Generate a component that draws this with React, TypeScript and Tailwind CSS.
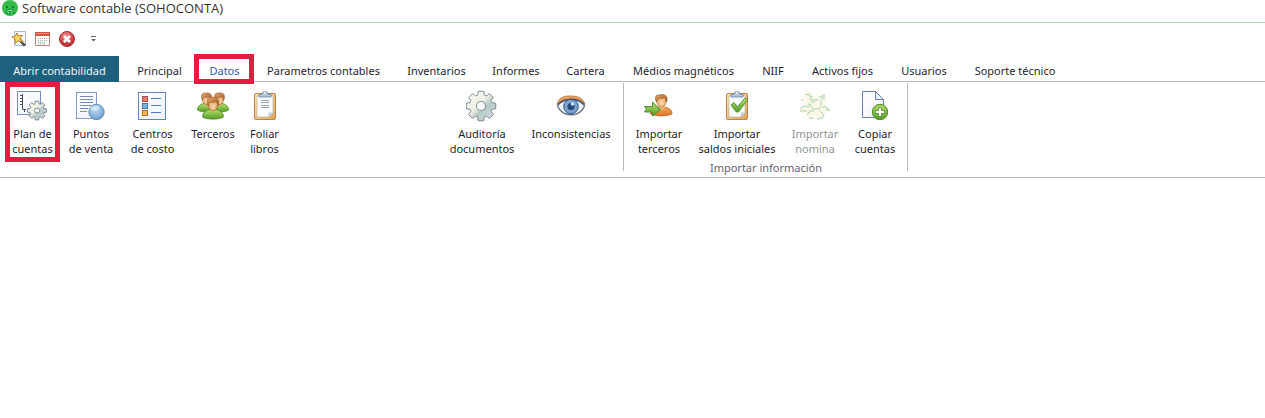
import type { ReactNode } from "react";

const gearPath = (cx: number, cy: number, outer: number, inner: number) => {
  const points: string[] = [];
  for (let i = 0; i < 8; i++) {
    const a = (i * Math.PI) / 4 - Math.PI / 2;
    const steps: [number, number][] = [
      [-0.29, inner],
      [-0.19, outer],
      [0.19, outer],
      [0.29, inner],
    ];
    steps.forEach(([d, r]) => {
      points.push(`${(cx + r * Math.cos(a + d)).toFixed(2)} ${(cy + r * Math.sin(a + d)).toFixed(2)}`);
    });
  }
  return `M${points.join("L")}Z`;
};

function Icon({ children }: { children: ReactNode }) {
  return (
    <svg className="block size-8 shrink-0" viewBox="1 0 32 32" fill="none" aria-hidden="true">
      {children}
    </svg>
  );
}

function Gradients() {
  return (
    <svg className="absolute size-0" aria-hidden="true">
      <defs>
        <linearGradient id="paper" x1="0" y1="0" x2="1" y2="1">
          <stop offset="0" stopColor="#fff" />
          <stop offset="1" stopColor="#edf1fa" />
        </linearGradient>
        <linearGradient id="metal" x1="0" y1="0" x2="1" y2="1">
          <stop offset="0" stopColor="#fdfcf3" />
          <stop offset="0.45" stopColor="#eceee4" />
          <stop offset="0.6" stopColor="#b5c9c4" />
          <stop offset="1" stopColor="#e3dff0" />
        </linearGradient>
        <radialGradient id="ball" cx="0.4" cy="0.3" r="0.8">
          <stop offset="0" stopColor="#c3e0f5" />
          <stop offset="1" stopColor="#6095cb" />
        </radialGradient>
        <linearGradient id="green" x1="0" y1="0" x2="0" y2="1">
          <stop offset="0" stopColor="#b9dc70" />
          <stop offset="1" stopColor="#559f25" />
        </linearGradient>
        <radialGradient id="face" cx="0.5" cy="0.65" r="0.65">
          <stop offset="0" stopColor="#fbdcae" />
          <stop offset="1" stopColor="#dd9556" />
        </radialGradient>
        <linearGradient id="hair" x1="0" y1="0" x2="1" y2="1">
          <stop offset="0" stopColor="#e2a567" />
          <stop offset="1" stopColor="#a1592a" />
        </linearGradient>
        <linearGradient id="orange" x1="0" y1="0" x2="0" y2="1">
          <stop offset="0" stopColor="#f5a658" />
          <stop offset="1" stopColor="#dc7225" />
        </linearGradient>
        <linearGradient id="board" x1="0" y1="0" x2="1" y2="1">
          <stop offset="0" stopColor="#fbe4ae" />
          <stop offset="1" stopColor="#e0a45a" />
        </linearGradient>
        <radialGradient id="red" cx="0.4" cy="0.25" r="0.8">
          <stop offset="0" stopColor="#ef8581" />
          <stop offset="1" stopColor="#b91f27" />
        </radialGradient>
      </defs>
    </svg>
  );
}

function Gear({ cx, cy, outer, inner, hole }: { cx: number; cy: number; outer: number; inner: number; hole: number }) {
  return (
    <>
      <path d={gearPath(cx, cy, outer, inner)} fill="url(#metal)" stroke="#7d8b96" strokeLinejoin="round" />
      <circle cx={cx} cy={cy} r={hole} fill="#fff" stroke="#7d8b96" />
    </>
  );
}

const LedgerIcon = () => (
  <Icon>
    <rect x="1.5" y="1.5" width="23" height="23" fill="url(#paper)" stroke="#7790c2" />
    <path d="M6.500 4v15.500M4 5.500h2M4 8.500h2M4 11.500h2M4 14.500h2M7 19.500h3M8.500 20v2M11.500 20v2" stroke="#444e66" />
    <Gear cx={21} cy={20.5} outer={9.5} inner={7} hole={2.5} />
  </Icon>
);

const StoreIcon = () => (
  <Icon>
    <rect x="2.500" y="2.500" width="20" height="26" fill="url(#paper)" stroke="#839aca" />
    <path d="M6 6.500h13M6 9.500h13M6 12.500h13M6 15.500h11M6 18.500h8M6 21.500h7" stroke="#788cb8" />
    <circle cx="22.500" cy="22" r="7.700" fill="url(#ball)" stroke="#517fb4" strokeWidth=".8" />
    <ellipse cx="21" cy="18.200" rx="4.500" ry="2.300" fill="#e2f2fc" opacity=".55" />
  </Icon>
);

const CentersIcon = () => (
  <Icon>
    <rect x="2.500" y="2.500" width="27" height="27" fill="url(#paper)" stroke="#6684bd" />
    <rect x="6.500" y="6.500" width="5" height="5" fill="#e37b66" stroke="#a8485b" />
    <rect x="6.500" y="13.500" width="5" height="5" fill="#79b7e2" stroke="#4777ae" />
    <rect x="6.500" y="20.500" width="5" height="5" fill="#f3b75b" stroke="#b66c33" />
    <path d="M15 8.500h10M15 15.500h10M15 22.500h10" stroke="#5b79b4" />
  </Icon>
);

function Person({ x, y, large = false }: { x: number; y: number; large?: boolean }) {
  return (
    <g transform={`translate(${x} ${y}) scale(${large ? 1.15 : 1})`}>
      <path d="M-9 16C-9 12-6 10-2.500 9.500L0 11 2.500 9.500C6 10 9 12 9 16 6 18.500-6 18.500-9 16Z" fill="url(#green)" stroke="#4d8b29" strokeWidth=".8" />
      <path d="M-2.500 8.500h5v1.500L0 12l-2.500-2Z" fill="#e8ad71" />
      <ellipse cx="0" cy="5.500" rx="4" ry="5" fill="url(#face)" stroke="#aa6737" strokeWidth=".6" />
      <path d="M-4.200 6.500C-6.500 0-3.500-1.500-1-1 4-1.800 6.500 1 4.200 6.500 4 4 3 3 2 2.800 0 4-3 3-3.500 3.500Z" fill="url(#hair)" stroke="#9a5c2c" strokeWidth=".5" />
    </g>
  );
}

const PeopleIcon = () => (
  <Icon>
    <Person x={10.5} y={4} />
    <Person x={23.5} y={4} />
    <Person x={17} y={8.5} large />
  </Icon>
);

function Board() {
  return (
    <>
      <rect x="6.500" y="3.500" width="21" height="26" rx="1.500" fill="url(#board)" stroke="#bd8442" />
      <path d="M9 6h16v17l-4 4H9Z" fill="#fafcff" stroke="#c3b698" strokeWidth=".7" />
      <path d="M21 27v-4h4Z" fill="#d3dfec" stroke="#a6b3c6" strokeWidth=".6" />
      <path d="M11 7V4.500L14 4c0-3 6-3 6 0l3 .5V7Z" fill="#b4c3dc" stroke="#6680ae" strokeWidth=".8" />
      <circle cx="17" cy="3" r=".9" fill="#fff" />
    </>
  );
}

const ClipboardIcon = () => (
  <Icon>
    <Board />
    <path d="M13 10.500h8M13 12.500h8M13 15.500h8M13 17.500h8" stroke="#93a3b4" />
  </Icon>
);

const CheckIcon = () => (
  <Icon>
    <Board />
    <path d="m11 15 3-2.500 3.500 4.500 7-8.500L28 9l-9.500 13h-2.200Z" fill="url(#green)" stroke="#4a9130" strokeWidth=".9" />
  </Icon>
);

const AuditIcon = () => (
  <Icon>
    <Gear cx={16} cy={16} outer={15} inner={11.5} hole={4.5} />
  </Icon>
);

const EyeIcon = () => (
  <Icon>
    <path d="M3 16C4 8 10 5.500 17 6c8 0 13 3 14 10-1 4-6 10-14 10S4 20 3 16Z" fill="#eac691" />
    <path d="M3 15C4 8 10 5.500 17 6c8 0 13 3 14 9-7-7-20-8-28 0Z" fill="#e9a35c" stroke="#ba713a" strokeWidth=".8" />
    <path d="M3.500 16C9 8 24 7 30.500 16 26 27 9 28 3.500 16Z" fill="#eef4fb" stroke="#566d9a" strokeWidth="1.200" />
    <circle cx="17" cy="16.500" r="7.300" fill="#7ba2cd" stroke="#34578a" />
    <circle cx="17" cy="16.500" r="3.500" fill="#244776" />
    <circle cx="18.500" cy="14" r="1.800" fill="#c6e5fa" />
    <path d="M4 14C10 8 24 7 30 14" stroke="#574f60" strokeWidth="1.200" />
  </Icon>
);

const ImportPersonIcon = () => (
  <Icon>
    <path d="M8.500 24c0-4 4-6 8.500-7l2.500 2 3-2c5 1 7.500 3 7.500 7-6 2.500-15.500 2.500-21.500 0Z" fill="url(#orange)" stroke="#b56024" strokeWidth=".8" />
    <path d="M16.500 15h6v3l-3 2.500-3-2.500Z" fill="#efb982" />
    <ellipse cx="19.500" cy="11" rx="4.700" ry="6" fill="url(#face)" stroke="#a75f31" strokeWidth=".6" />
    <path d="M14.500 12C11.500 6 15 4.500 18 5c4-1.500 9 1 6.500 7-.5-3-1-4-2-4.500-3 1.500-6 0-7 1.500Z" fill="url(#hair)" stroke="#834516" strokeWidth=".5" />
    <path d="M2.500 16.500h8V12l8 7.500-8 6.500v-4h-8l2-3Z" fill="url(#green)" stroke="#458925" strokeWidth=".9" />
  </Icon>
);

const DisabledPeopleIcon = () => (
  <Icon>
    <path d="M5 6c2-3 6-3 8-1l3 2h4c1-4 6-4 8-1l1 6-2 4c4 1 5 3 5 6l-6 1 1 4c-5 3-14 3-18 0l1-3-8-2c0-3 2-5 5-6l-2-4Z" fill="#fdf9ea" />
    <path d="M7 4.500h5v2h3M4 9v2M11 8l2 1 1 4M12 16l-2-3M13 10h7M21 7h3l2-2v3l-3 2M12 14l3 5h6l2-4v-4M16 13v-2M24 17h4l3 3M2 19l4-3 5 1M2 21h7M28 20h4M9 25l3-4h4M22 21l4 4-2 3-5 1M11 28h4" stroke="#bfddbd" strokeWidth="1.300" />
  </Icon>
);

const CopyIcon = () => (
  <Icon>
    <path d="M4.500 1.500h13l8 8v18h-21Z" fill="url(#paper)" stroke="#6681b9" />
    <path d="M17.500 1.500v8h8Z" fill="#eaf0fb" stroke="#6681b9" />
    <circle cx="22" cy="22" r="7.700" fill="url(#green)" stroke="#4c8b20" />
    <path d="M20.500 17.500h3v3h3v3h-3v3h-3v-3h-3v-3h3Z" fill="#fff" stroke="#49851f" strokeWidth=".7" />
  </Icon>
);

type Command = { lines: string[]; width: string; icon: ReactNode; marked?: boolean; disabled?: boolean };

const dataCommands: Command[] = [
  { lines: ["Plan de", "cuentas"], width: "w-[55px]", icon: <LedgerIcon />, marked: true },
  { lines: ["Puntos", "de venta"], width: "w-[62px]", icon: <StoreIcon /> },
  { lines: ["Centros", "de costo"], width: "w-[61px]", icon: <CentersIcon /> },
  { lines: ["Terceros"], width: "w-[60px]", icon: <PeopleIcon /> },
  { lines: ["Foliar", "libros"], width: "w-[43px]", icon: <ClipboardIcon /> },
];

const auditCommands: Command[] = [
  { lines: ["Auditoría", "documentos"], width: "w-[80px]", icon: <AuditIcon /> },
  { lines: ["Inconsistencias"], width: "w-[98px]", icon: <EyeIcon /> },
];

const importCommands: Command[] = [
  { lines: ["Importar", "terceros"], width: "w-[62px]", icon: <ImportPersonIcon /> },
  { lines: ["Importar", "saldos iniciales"], width: "w-[94px]", icon: <CheckIcon /> },
  { lines: ["Importar", "nomina"], width: "w-[62px]", icon: <DisabledPeopleIcon />, disabled: true },
  { lines: ["Copiar", "cuentas"], width: "w-[58px]", icon: <CopyIcon /> },
];

function CommandList({ items }: { items: Command[] }) {
  return (
    <div className="flex">
      {items.map((item) => (
        <button
          key={item.lines.join(" ")}
          type="button"
          disabled={item.disabled}
          className={`flex h-20 shrink-0 flex-col items-center border-y-[5px] pt-[3px] text-center leading-[15px] whitespace-nowrap ${item.width} ${
            item.marked ? "border-x-[5px] border-[#e31c40]" : "border-transparent"
          } ${item.disabled ? "text-[#8f9696]" : "text-[#1e1e2e]"}`}
        >
          {item.icon}
          <span className="mt-1">
            {item.lines.map((line) => (
              <span key={line} className="block">
                {line}
              </span>
            ))}
          </span>
        </button>
      ))}
    </div>
  );
}

const tabs = [
  { name: "Principal", width: "w-[73px]" },
  { name: "Datos", width: "w-[57px]" },
  { name: "Parametros contables", width: "w-[141px]" },
  { name: "Inventarios", width: "w-[85px]" },
  { name: "Informes", width: "w-[74px]" },
  { name: "Cartera", width: "w-[65px]" },
  { name: "Médios magnéticos", width: "w-[131px]" },
  { name: "NIIF", width: "w-[48px]" },
  { name: "Activos fijos", width: "w-[91px]" },
  { name: "Usuarios", width: "w-[72px]" },
  { name: "Soporte técnico", width: "w-[110px]" },
];

function TitleBar() {
  return (
    <header className="flex h-[23px] items-start gap-1 border-b border-[#b9d9bb] pl-0.5">
      <svg className="size-4" viewBox="0 0 16 16" aria-hidden="true">
        <circle cx="8" cy="8" r="8" fill="#35bb48" />
        <path d="M3.500 10c1-2 8-2 9 0v3c-2.500 2-6.500 2-9 0Z" fill="#22a045" />
        <path d="M4 7h2M10 7h2" stroke="#0f6a2e" strokeWidth="1.600" />
        <path d="M4.500 11.500c1.500-1.500 5.500-1.500 7 0M6.500 12v1.500M9.500 12v1.500" stroke="#8fe29a" fill="none" />
      </svg>
      <h1 className="font-['Open_Sans','Noto_Sans',sans-serif] text-[13px] leading-[17px] text-[#333]">
        Software contable (SOHOCONTA)
      </h1>
    </header>
  );
}

function QuickAccess() {
  return (
    <div className="flex h-[33px] items-center gap-2 pb-0.5 pl-[11px]">
      <button type="button" aria-label="Asistente">
        <svg className="block size-4" viewBox="0 0 16 16" aria-hidden="true">
          <path d="M3.500.5h11v14h-11Z" fill="#f4f8ff" stroke="#a9b9dc" />
          <path d="m8 8 6 6.500" stroke="#4f473e" strokeWidth="3" />
          <path d="m9 8 5 5" stroke="#d8c79c" />
          <path d="m6 2 1.200 3 4.300-.7-2.500 3.200 2 3.300-3.800-1-3 3V8.200L.8 6l3.600-.8Z" fill="#ffd75c" stroke="#bd7a2c" strokeWidth=".9" />
        </svg>
      </button>
      <button type="button" aria-label="Calendario">
        <svg className="block size-4" viewBox="0 0 16 16" aria-hidden="true">
          <path d="M.5 1.500h14v13H.5Z" fill="#fff" stroke="#b98678" />
          <path d="M0 1h15v4H0Z" fill="#cf5540" />
          <path d="M1 2.500h13" stroke="#e68d74" />
          <path d="M3 7.500h10M3 9.500h10M3 11.500h8M3 13h7" stroke="#8eb29b" strokeDasharray="1 1" />
        </svg>
      </button>
      <button type="button" aria-label="Cerrar">
        <svg className="block size-4" viewBox="0 0 16 16" aria-hidden="true">
          <circle cx="8" cy="8" r="7.500" fill="url(#red)" stroke="#a62e36" />
          <path d="m5 5 6 6m0-6-6 6" stroke="#fff" strokeWidth="2.800" />
        </svg>
      </button>
      <button type="button" aria-label="Personalizar" className="pl-[7px]">
        <svg className="block h-2 w-2" viewBox="0 0 8 8" aria-hidden="true">
          <path d="M1 1.500h5" stroke="#666" />
          <path d="M1 4h5L3.500 6.500Z" fill="#666" />
        </svg>
      </button>
    </div>
  );
}

export default function App() {
  return (
    <div className="min-h-screen overflow-x-hidden bg-white font-['Noto_Sans','Open_Sans',sans-serif] text-[11px]">
      <Gradients />
      <TitleBar />
      <QuickAccess />
      <nav className="flex h-[26px] border-b border-[#bababa]">
        <button type="button" className="mr-1 h-[26px] w-[119px] shrink-0 bg-[#20607f] pt-1 whitespace-nowrap text-[#eef6fa]">
          Abrir contabilidad
        </button>
        {tabs.map((tab) => (
          <button
            key={tab.name}
            type="button"
            className={`relative h-[26px] shrink-0 pt-1 whitespace-nowrap ${tab.width} ${
              tab.name === "Datos" ? "text-[#3c559f]" : "text-[#1e1e2e]"
            }`}
          >
            {tab.name}
            {tab.name === "Datos" && (
              <span className="absolute -inset-y-0.5 -left-0.5 right-[-1px] z-10 border-[5px] border-[#e31c40]" />
            )}
          </button>
        ))}
      </nav>
      <main className="flex h-24 border-b border-[#bababa]">
        <section className="flex pl-[5px]" aria-label="Datos">
          <CommandList items={dataCommands} />
        </section>
        <section className="mt-px ml-[156px] h-[88px] border-r border-[#bababa] pr-[3px]" aria-label="Auditoría">
          <div className="-mt-px">
            <CommandList items={auditCommands} />
          </div>
        </section>
        <section className="mt-px h-[88px] border-r border-[#bababa] pr-[3px] pl-1">
          <div className="-mt-px">
            <CommandList items={importCommands} />
          </div>
          <h2 className="-mt-0.5 text-center leading-4 text-[#676273]">Importar información</h2>
        </section>
      </main>
    </div>
  );
}
